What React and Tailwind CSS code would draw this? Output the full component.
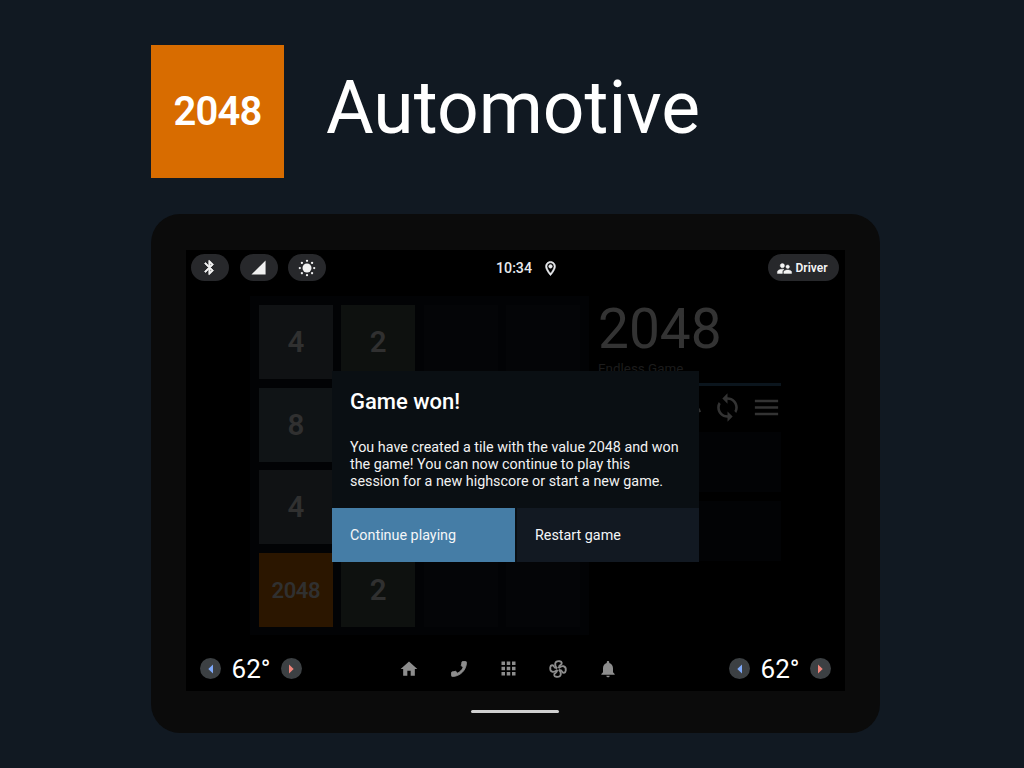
import React from "react";
import {
  MdApps,
  MdBluetooth,
  MdHome,
  MdCall,
  MdLoop,
  MdMenu,
  MdNotifications,
  MdOutlineLocationOn,
  MdSignalCellular4Bar,
  MdSupervisorAccount,
  MdUndo,
} from "react-icons/md";

const TILES = [
  4, 2, 0, 0,
  8, 0, 0, 0,
  4, 0, 0, 0,
  2048, 2, 0, 0,
];

const TILE_STYLES = {
  0: "bg-[#040507]",
  2: "bg-[#0e110f] text-[29.5px]",
  4: "bg-[#101214] text-[29.5px]",
  8: "bg-[#101416] text-[29.5px]",
  2048: "bg-[#2b1600] text-[22px] tracking-[-0.4px]",
};

function SunIcon() {
  return (
    <svg viewBox="0 0 24 24" className="size-[18px]" fill="currentColor">
      <circle cx="12" cy="12" r="6" />
      {[0, 45, 90, 135, 180, 225, 270, 315].map((a) => (
        <circle key={a} cx="12" cy="2.4" r="1.5" transform={`rotate(${a} 12 12)`} />
      ))}
    </svg>
  );
}

function FanIcon() {
  return (
    <svg viewBox="0 0 24 24" className="size-[20px]" fill="none" stroke="currentColor" strokeWidth="2.2">
      {[0, 90, 180, 270].map((a) => (
        <path
          key={a}
          transform={`rotate(${a} 12 12)`}
          d="M11 11C9 9.3 8.4 7 8.7 5.3C9.2 3.1 11.4 2.4 14 2.7C17.2 3.1 17.2 6.4 15 7.1C13.3 7.7 13 9 13 11"
        />
      ))}
    </svg>
  );
}

function Pill({ children }) {
  return (
    <div className="flex h-[27px] w-[38px] items-center justify-center rounded-full bg-[#27282b] pr-[1px]">{children}</div>
  );
}

function Arrow({ left }) {
  return (
    <div className="flex size-[21px] items-center justify-center rounded-full bg-[#3c4043]">
      <svg viewBox="0 0 5 10" className="h-[10px] w-[5px]">
        {left ? <path d="M5 0.5v9L0.3 5z" fill="#7fa9f8" /> : <path d="M0 0.5v9L4.7 5z" fill="#ef857b" />}
      </svg>
    </div>
  );
}

function Climate() {
  return (
    <div className="flex items-center">
      <Arrow left />
      <span className="w-[60px] pt-[1px] text-center text-[26px] leading-[30px] text-white">62°</span>
      <Arrow />
    </div>
  );
}

function StatusBar() {
  return (
    <div className="grid h-[36px] grid-cols-[1fr_auto_1fr] items-center pr-[6px] pb-[1px] pl-[5px]">
      <div className="flex gap-[10.7px] text-[#f1f1f1]">
        <Pill><MdBluetooth size={17} strokeWidth={1} className="[&>path[fill=none]]:stroke-none" /></Pill>
        <Pill><MdSignalCellular4Bar size={17} /></Pill>
        <Pill><SunIcon /></Pill>
      </div>
      <div className="flex items-center gap-[10px] pt-[1px] pl-[25px] text-[#e8eaed]">
        <span className="text-[14.2px] leading-5 font-medium">10:34</span>
        <MdOutlineLocationOn size={17} strokeWidth={0.8} className="[&>path[fill=none]]:stroke-none" />
      </div>
      <div className="flex h-[27px] w-[71px] items-center justify-center gap-[3px] justify-self-end rounded-full bg-[#27282b] pt-[1px] pr-[4px] text-[12px] font-semibold text-[#f5f5f5]">
        <MdSupervisorAccount size={17} strokeWidth={0.6} className="[&>path[fill=none]]:stroke-none" />
        <span>Driver</span>
      </div>
    </div>
  );
}

function Board() {
  return (
    <div className="grid h-[339px] w-[339px] grid-cols-4 grid-rows-4 gap-[8.8px] bg-[#020305] p-[9px] pb-[8px]">
      {TILES.map((value, i) => (
        <div key={i} className={`flex items-center justify-center font-semibold text-[#303030] ${TILE_STYLES[value]}`}>
          {value || ""}
        </div>
      ))}
    </div>
  );
}

function Sidebar() {
  return (
    <div className="flex w-[184px] flex-col text-[#333333]">
      <h2 className="mt-[3px] pl-[1px] text-[55px] leading-[60px]">2048</h2>
      <p className="mt-[1px] pl-[1px] text-[13.4px] leading-[18px] text-[#1c1c1c]">Endless Game</p>
      <div className="mt-[5px] h-[3px] bg-[#0b151d]" />
      <div className="-mr-[1px] mt-[6px] flex h-[31px] justify-end gap-[8px]">
        <MdUndo size={31} className="mr-[1px]" />
        <MdLoop size={31} />
        <MdMenu size={31} />
      </div>
      <div className="mt-[9px] h-[60px] bg-[#020305]" />
      <div className="mt-[9px] h-[60px] bg-[#020305]" />
    </div>
  );
}

function Dialog() {
  return (
    <div className="absolute top-[121px] left-[146px] flex h-[191px] w-[367px] flex-col bg-[#0a0f13]">
      <div className="flex-1 px-[18px] pt-[18px]">
        <h3 className="text-[22px] leading-[26px] font-medium text-white">Game won!</h3>
        <p className="mt-[24px] text-[14.35px] leading-[17.2px] whitespace-nowrap text-[#f2f2f2]">
          You have created a tile with the value 2048 and won
          <br />
          the game! You can now continue to play this
          <br />
          session for a new highscore or start a new game.
        </p>
      </div>
      <div className="grid h-[54px] grid-cols-2 gap-[2px] text-[14.35px] text-[#f4f6f8]">
        <button className="bg-[#457da6] px-[18px] pt-[1px] text-left">Continue playing</button>
        <button className="bg-[#121922] pt-[1px] pl-[18.5px] text-left">Restart game</button>
      </div>
    </div>
  );
}

function NavBar() {
  return (
    <div className="flex h-[44px] items-center justify-between pr-[14px] pb-[1px] pl-[14px]">
      <Climate />
      <div className="flex items-center gap-[29.7px] pr-[14px] text-[#8d8d8d]">
        <MdHome size={20} />
        <MdCall size={20} strokeWidth={1} className="-scale-x-100 [&>path[fill=none]]:stroke-none" />
        <MdApps size={21} className="-mx-[0.5px]" />
        <FanIcon />
        <MdNotifications size={20} />
      </div>
      <Climate />
    </div>
  );
}

export default function App() {
  return (
    <div className="h-[768px] w-[1024px] overflow-hidden bg-[#111922] pt-[45px] pl-[151px] font-['Roboto',sans-serif]">
      <header className="flex h-[133px] items-center">
        <div className="flex size-[133px] items-center justify-center bg-[#d86c00] pt-[1px] text-[40px] font-semibold tracking-[-0.8px] text-white">
          2048
        </div>
        <h1 className="ml-[42px] pb-[5px] text-[73.2px] leading-none text-white">Automotive</h1>
      </header>
      <main className="mt-[36px] flex h-[519px] w-[729px] flex-col items-center rounded-[29px] bg-[#0b0b0b] pt-[36px]">
        <div className="relative flex h-[441px] w-[659px] flex-col bg-black">
          <StatusBar />
          <div className="mt-[10px] flex flex-1 gap-[8px] pl-[64px]">
            <Board />
            <Sidebar />
          </div>
          <NavBar />
          <Dialog />
        </div>
        <div className="mt-[19px] mr-px h-[3px] w-[88px] rounded-full bg-[#d0d0d0]" />
      </main>
    </div>
  );
}
